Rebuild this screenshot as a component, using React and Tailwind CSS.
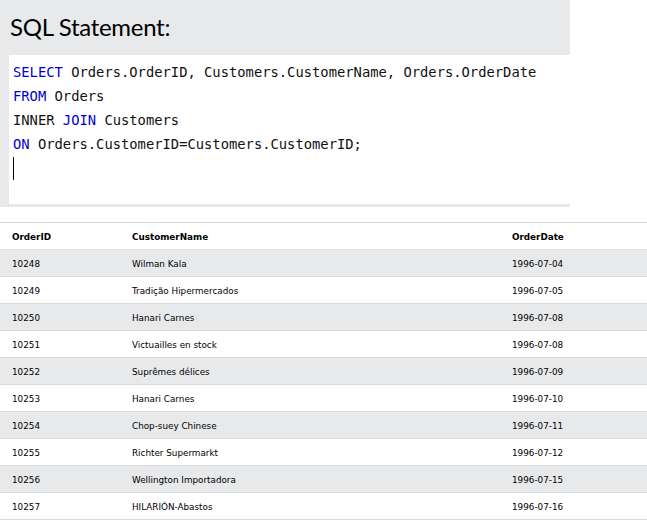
const rows = [
  ['10248', 'Wilman Kala', '1996-07-04'],
  ['10249', 'Tradição Hipermercados', '1996-07-05'],
  ['10250', 'Hanari Carnes', '1996-07-08'],
  ['10251', 'Victuailles en stock', '1996-07-08'],
  ['10252', 'Suprêmes délices', '1996-07-09'],
  ['10253', 'Hanari Carnes', '1996-07-10'],
  ['10254', 'Chop-suey Chinese', '1996-07-11'],
  ['10255', 'Richter Supermarkt', '1996-07-12'],
  ['10256', 'Wellington Importadora', '1996-07-15'],
  ['10257', 'HILARIÓN-Abastos', '1996-07-16'],
]

function Kw({ children }) {
  return <span className="text-[#0000cd]">{children}</span>
}

export default function App() {
  return (
    <div className="w-[647px] h-[521px] overflow-hidden bg-white">
      {/* SQL editor panel */}
      <div className="w-[570px] bg-[#e7e9eb] pt-[12px] pl-[9px] pb-[3px]">
        <h2 className="pl-[1px] text-[24px] leading-[30px] tracking-[-0.3px] text-black font-['Lato',sans-serif]">
          SQL Statement:
        </h2>
        <div className="mt-[13px] h-[149px] bg-white pt-[5px] pl-[4px] font-['DejaVu_Sans_Mono',monospace] text-[13.8px] leading-[24px] text-[#111] whitespace-pre">
          <div><Kw>SELECT</Kw> Orders.OrderID, Customers.CustomerName, Orders.OrderDate</div>
          <div><Kw>FROM</Kw> Orders</div>
          <div>INNER <Kw>JOIN</Kw> Customers</div>
          <div><Kw>ON</Kw> Orders.CustomerID=Customers.CustomerID;</div>
          <div className="flex h-[24px] items-center">
            <span className="block h-[23px] w-[1px] bg-black" />
          </div>
        </div>
      </div>

      {/* Result table */}
      <div className="mt-[15px] border-t border-[#d5d5d5] font-['DejaVu_Sans',sans-serif] text-[8.8px] text-black">
        <div className="grid h-[27px] grid-cols-[120px_380px_1fr] items-center border-b border-[#e2e2e2] pt-[4px] font-bold">
          <div className="pl-[12px]">OrderID</div>
          <div className="pl-[12px]">CustomerName</div>
          <div className="pl-[12px]">OrderDate</div>
        </div>
        {rows.map((r, i) => (
          <div
            key={r[0]}
            className={`grid h-[27px] grid-cols-[120px_380px_1fr] items-center border-b border-[#dcdcdc] pt-[4px] ${i % 2 === 0 ? 'bg-[#e7e9eb]' : 'bg-white'}`}
          >
            <div className="pl-[12px]">{r[0]}</div>
            <div className="pl-[12px]">{r[1]}</div>
            <div className="pl-[12px]">{r[2]}</div>
          </div>
        ))}
      </div>
    </div>
  )
}
